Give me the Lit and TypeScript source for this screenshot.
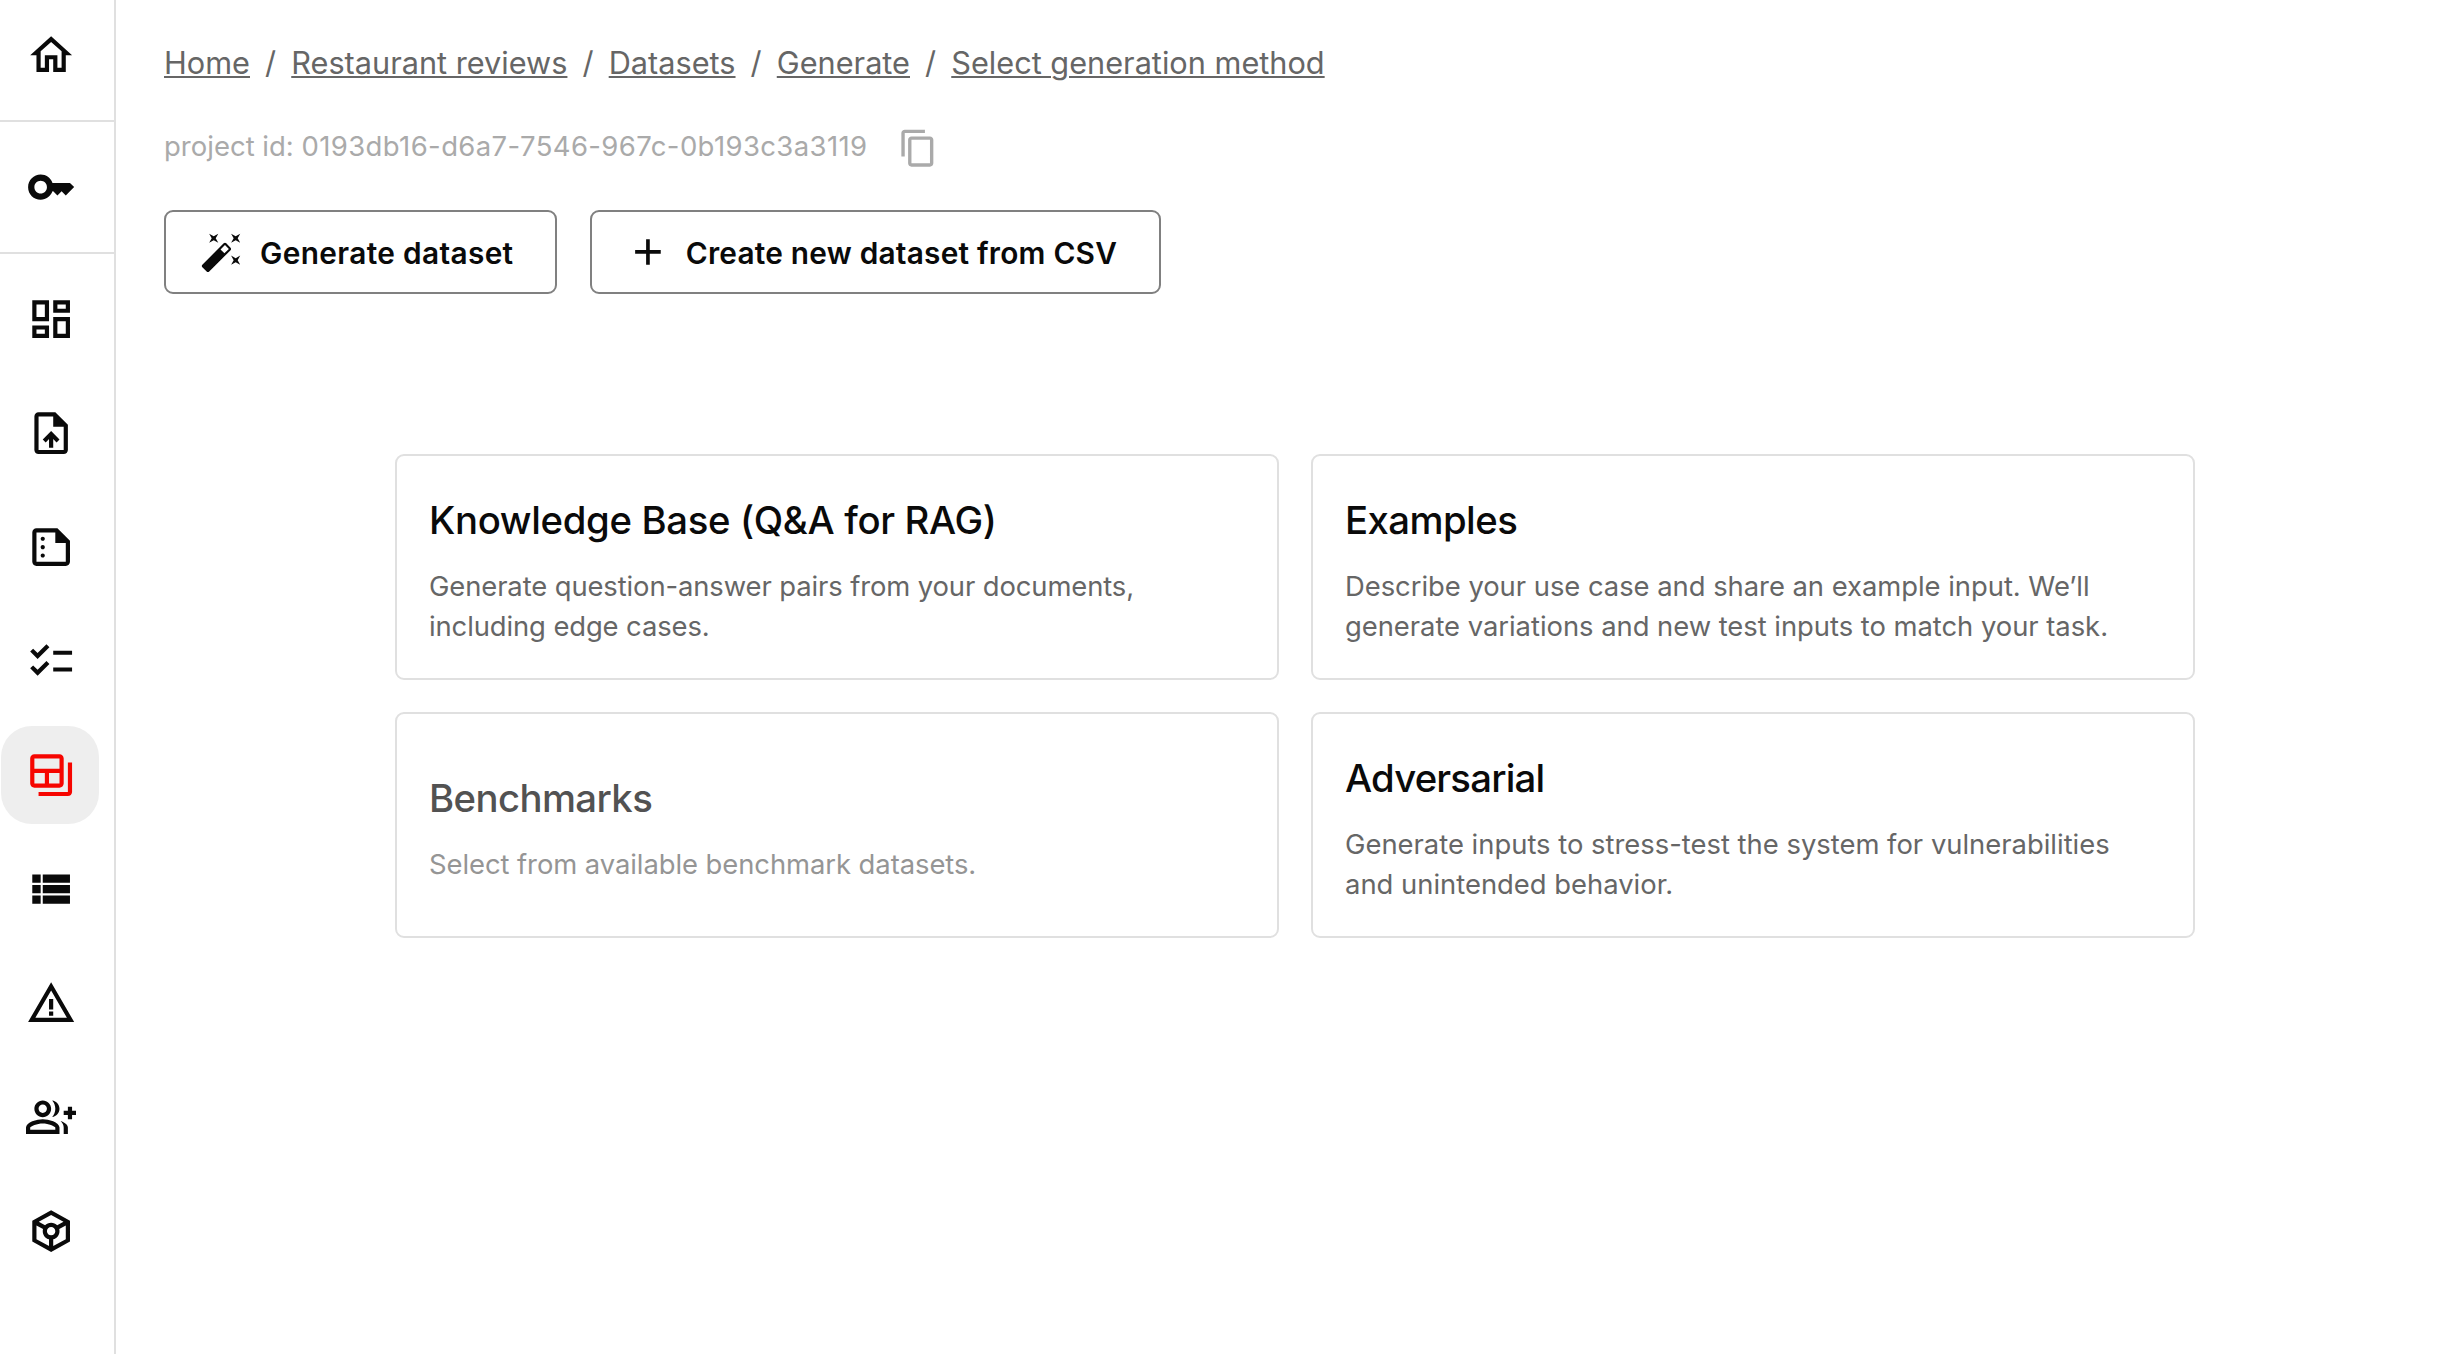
import { LitElement, html, css, svg } from "lit";
import { customElement } from "lit/decorators.js";
import { classMap } from "lit/directives/class-map.js";
import { styleMap } from "lit/directives/style-map.js";

const ICONS: Record<string, string> = {
  home: "m12 5.69 5 4.5V18h-2v-6H9v6H7v-7.81l5-4.5M12 3 2 12h3v8h6v-6h2v6h6v-8h3L12 3z",
  key: "M21 10h-8.35C11.83 7.67 9.61 6 7 6c-3.31 0-6 2.69-6 6s2.69 6 6 6c2.61 0 4.83-1.67 5.65-4H13l2 2 2-2 2 2 4-4.04L21 10zM7 15c-1.65 0-3-1.35-3-3s1.35-3 3-3 3 1.35 3 3-1.35 3-3 3z",
  dashboard: "M19 5v2h-4V5h4M9 5v6H5V5h4m10 8v6h-4v-6h4M9 17v2H5v-2h4M21 3h-8v6h8V3zM11 3H3v10h8V3zm10 8h-8v10h8V11zm-10 4H3v6h8v-6z",
  upload: "M14 2H6c-1.1 0-1.99.9-1.99 2L4 20c0 1.1.89 2 1.99 2H18c1.1 0 2-.9 2-2V8l-6-6zm4 18H6V4h7v5h5v11zM8 15.01l1.41 1.41L11 14.84V19h2v-4.16l1.59 1.59L16 15.01 12.01 11 8 15.01z",
  summary: "M15 3H5c-1.1 0-1.99.9-1.99 2L3 19c0 1.1.89 2 1.99 2H19c1.1 0 2-.9 2-2V9l-6-6zM5 19V5h9v5h5v9H5zM9 8c0 .55-.45 1-1 1s-1-.45-1-1 .45-1 1-1 1 .45 1 1zm0 4c0 .55-.45 1-1 1s-1-.45-1-1 .45-1 1-1 1 .45 1 1zm0 4c0 .55-.45 1-1 1s-1-.45-1-1 .45-1 1-1 1 .45 1 1z",
  checklist: "M22 7h-9v2h9V7zm0 8h-9v2h9v-2zM5.54 11 2 7.46l1.41-1.41 2.12 2.12 4.24-4.24 1.41 1.41L5.54 11zm0 8L2 15.46l1.41-1.41 2.12 2.12 4.24-4.24 1.41 1.41L5.54 19z",
  tables: "M20 6v14H6v2h14c1.1 0 2-.9 2-2V6h-2zM16 2H4c-1.1 0-2 .9-2 2v12c0 1.1.9 2 2 2h12c1.1 0 2-.9 2-2V4c0-1.1-.9-2-2-2zM9 16H4v-5h5v5zm7 0h-5v-5h5v5zm0-7H4V4h12v5z",
  list: "M3 14h4v-4H3v4zm0 5h4v-4H3v4zM3 9h4V5H3v4zm5 5h13v-4H8v4zm0 5h13v-4H8v4zM8 5v4h13V5H8z",
  warning: "M12 5.99 19.53 19H4.47L12 5.99M12 2 1 21h22L12 2zm1 14h-2v2h2v-2zm0-6h-2v5h2v-5z",
  group: "M22 9V7h-2v2h-2v2h2v2h2v-2h2V9h-2zM8 12c2.21 0 4-1.79 4-4s-1.79-4-4-4-4 1.79-4 4 1.79 4 4 4zm0-6c1.1 0 2 .9 2 2s-.9 2-2 2-2-.9-2-2 .9-2 2-2zM8 13c-2.67 0-8 1.34-8 4v3h16v-3c0-2.66-5.33-4-8-4zm6 5H2v-.99C2.2 16.29 5.3 15 8 15s5.8 1.29 6 2v1zM12.51 4.05C13.43 5.11 14 6.49 14 8s-.57 2.89-1.49 3.95C14.47 11.7 16 10.04 16 8s-1.53-3.7-3.49-3.95zM16.53 13.83C17.42 14.66 18 15.7 18 17v3h2v-3c0-1.45-1.59-2.51-3.47-3.17z",
  token: "M21 7 12 2 3 7v10l9 5 9-5V7zm-9-2.71 5.91 3.28-3.01 1.67C14.17 8.48 13.14 8 12 8s-2.17.48-2.9 1.24L6.09 7.57 12 4.29zm-1 14.87-6-3.33V9.26L8.13 11c-.09.31-.13.65-.13 1 0 1.86 1.27 3.43 3 3.87v3.29zM10 12c0-1.1.9-2 2-2s2 .9 2 2-.9 2-2 2-2-.9-2-2zm3 7.16v-3.28c1.73-.44 3-2.01 3-3.87 0-.35-.04-.69-.13-1.01L19 9.26v6.57l-6 3.33z",
  copy: "M16 1H4c-1.1 0-2 .9-2 2v14h2V3h12V1zm3 4H8c-1.1 0-2 .9-2 2v14c0 1.1.9 2 2 2h11c1.1 0 2-.9 2-2V7c0-1.1-.9-2-2-2zm0 16H8V7h11v14z",
  wand: "M7.5 5.6 10 7 8.6 4.5 10 2 7.5 3.4 5 2l1.4 2.5L5 7zm12 9.8L17 14l1.4 2.5L17 19l2.5-1.4L22 19l-1.4-2.5L22 14zM22 2l-2.5 1.4L17 2l1.4 2.5L17 7l2.5-1.4L22 7l-1.4-2.5zm-7.63 5.29c-.39-.39-1.02-.39-1.41 0L1.29 18.96c-.39.39-.39 1.02 0 1.41l2.34 2.34c.39.39 1.02.39 1.41 0L16.7 11.05c.39-.39.39-1.02 0-1.41l-2.33-2.35zm-1.03 5.49-2.12-2.12 2.44-2.44 2.12 2.12-2.44 2.44z",
  plus: "M19 13h-6v6h-2v-6H5v-2h6V5h2v6h6v2z",
};

const icon = (name: string) =>
  html`<svg class="icon" viewBox="0 0 24 24" aria-hidden="true">${svg`<path d=${ICONS[name]}></path>`}</svg>`;

const NAV = ["dashboard", "upload", "summary", "checklist", "tables", "list", "warning", "group", "token"];
const CRUMBS = ["Home", "Restaurant reviews", "Datasets", "Generate", "Select generation method"];

interface Card {
  title: string;
  lines: string[];
  titleTracking: number;
  textTracking: number;
  disabled?: boolean;
}

const CARDS: Card[] = [
  {
    title: "Knowledge Base (Q&A for RAG)",
    lines: ["Generate question-answer pairs from your documents,", "including edge cases."],
    titleTracking: -0.34,
    textTracking: -0.1,
  },
  {
    title: "Examples",
    lines: ["Describe your use case and share an example input. We’ll", "generate variations and new test inputs to match your task."],
    titleTracking: -0.55,
    textTracking: -0.03,
  },
  {
    title: "Benchmarks",
    lines: ["Select from available benchmark datasets."],
    titleTracking: -0.58,
    textTracking: -0.06,
    disabled: true,
  },
  {
    title: "Adversarial",
    lines: ["Generate inputs to stress-test the system for vulnerabilities", "and unintended behavior."],
    titleTracking: -0.8,
    textTracking: 0,
  },
];

@customElement("app-root")
export class AppRoot extends LitElement {
  static styles = css`
    :host {
      display: flex;
      height: 1354px;
      overflow: hidden;
      background: #fff;
      color: #0a0a0a;
      font-family: Inter, "Liberation Sans", sans-serif;
    }
    * {
      box-sizing: border-box;
    }
    .icon {
      display: block;
      width: 50.26px;
      height: 50.26px;
      flex: none;
      fill: currentColor;
    }
    .sidebar {
      flex: none;
      width: 116px;
      border-right: 2px solid #e0e0e0;
    }
    .top {
      display: flex;
      align-items: center;
      padding-left: 25.9px;
      border-bottom: 2px solid #e0e0e0;
    }
    .top.first {
      height: 122px;
      padding-bottom: 9px;
    }
    .top.second {
      height: 132px;
    }
    .nav {
      display: flex;
      flex-direction: column;
      gap: 16px;
      padding: 16px 0 0 1px;
    }
    .item {
      display: flex;
      align-items: center;
      justify-content: center;
      width: 98px;
      height: 98px;
      padding-left: 2px;
      border-radius: 31px;
    }
    .item.active {
      background: #eee;
      color: #f60500;
    }
    .main {
      flex: 1;
      display: flex;
      flex-direction: column;
      padding: 43px 22px 0 48px;
    }
    .crumbs {
      display: flex;
      gap: 15.1px;
      height: 40px;
      font-size: 30.7px;
      line-height: 40px;
      color: #666;
      white-space: nowrap;
    }
    .crumb {
      color: inherit;
      text-decoration: underline;
      text-decoration-thickness: 2px;
      text-underline-offset: 2px;
    }
    .project {
      display: flex;
      gap: 30.5px;
      height: 42px;
      margin-top: 43px;
      color: #aaa;
      font-size: 27.5px;
      line-height: 40px;
      white-space: nowrap;
    }
    .project-id {
      letter-spacing: 0.38px;
    }
    .project .icon {
      width: 40.4px;
      height: 40.4px;
      margin-top: 1.6px;
    }
    .actions {
      display: flex;
      gap: 32.2px;
      margin-top: 42px;
    }
    .button {
      display: flex;
      align-items: center;
      height: 84px;
      padding: 0 42px 0 34.4px;
      border: 2px solid #808080;
      border-radius: 9px;
      background: none;
      color: inherit;
      font: 600 29.8px/40px Inter, "Liberation Sans", sans-serif;
      white-space: nowrap;
    }
    .button .icon {
      width: 43.9px;
      height: 43.9px;
      margin-right: 15.8px;
    }
    .label {
      padding-top: 2px;
    }
    .cards {
      display: grid;
      grid-template-columns: 884px 884px;
      grid-auto-rows: 226px;
      gap: 32px;
      align-self: center;
      margin-top: 160px;
    }
    .card {
      display: flex;
      flex-direction: column;
      justify-content: center;
      padding: 5px 32px 0;
      border: 2px solid #e0e0e0;
      border-radius: 9px;
      white-space: nowrap;
    }
    .title {
      margin: 0 0 19px;
      font-size: 38.3px;
      font-weight: 500;
      line-height: 54px;
    }
    .text {
      margin: 0;
      color: #666;
      font-size: 27.4px;
      line-height: 40px;
    }
    .disabled .title {
      color: #525252;
    }
    .disabled .text {
      color: #959595;
    }
  `;

  render() {
    return html`
      <nav class="sidebar">
        <div class="top first">${icon("home")}</div>
        <div class="top second">${icon("key")}</div>
        <div class="nav">
          ${NAV.map((n) => html`<div class=${classMap({ item: true, active: n === "tables" })}>${icon(n)}</div>`)}
        </div>
      </nav>
      <main class="main">
        <div class="crumbs">
          ${CRUMBS.map((c, i) => html`${i ? html`<span>/</span>` : ""}<a class="crumb">${c}</a>`)}
        </div>
        <div class="project">
          <span>project id: <span class="project-id">0193db16-d6a7-7546-967c-0b193c3a3119</span></span>
          ${icon("copy")}
        </div>
        <div class="actions">
          <button class="button">
            ${icon("wand")}<span class="label" style=${styleMap({ letterSpacing: "0.35px" })}>Generate dataset</span>
          </button>
          <button class="button">
            ${icon("plus")}<span class="label" style=${styleMap({ letterSpacing: "0.23px" })}>Create new dataset from CSV</span>
          </button>
        </div>
        <section class="cards">
          ${CARDS.map(
            (c) => html`<article class=${classMap({ card: true, disabled: !!c.disabled })}>
              <h2 class="title" style=${styleMap({ letterSpacing: `${c.titleTracking}px` })}>${c.title}</h2>
              <p class="text" style=${styleMap({ letterSpacing: `${c.textTracking}px` })}>
                ${c.lines.map((l, i) => html`${i ? html`<br />` : ""}${l}`)}
              </p>
            </article>`,
          )}
        </section>
      </main>
    `;
  }
}
